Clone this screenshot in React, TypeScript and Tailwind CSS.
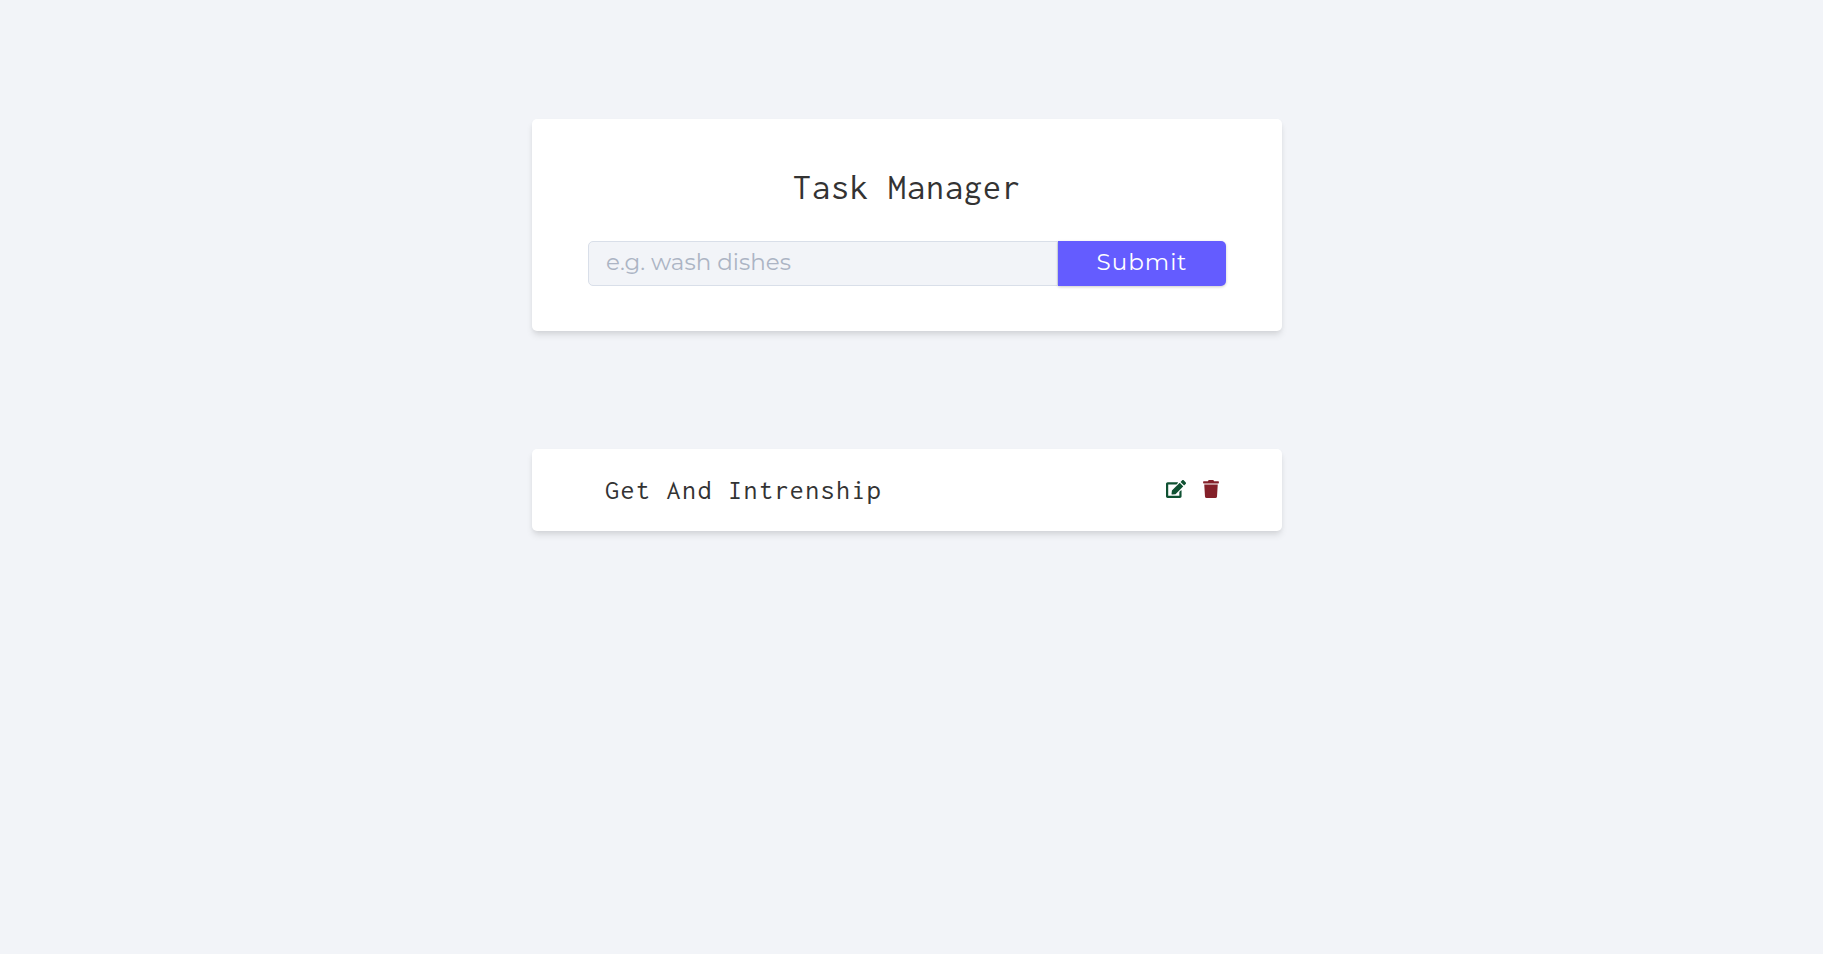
import { useState } from 'react';
import type { FormEvent } from 'react';
import { FaEdit, FaTrash } from 'react-icons/fa';

type Task = { id: number; name: string };

const initialTasks: Task[] = [{ id: 1, name: 'Get And Intrenship' }];

function TaskForm({ onAdd }: { onAdd: (name: string) => void }) {
  const [name, setName] = useState('');

  const submit = (event: FormEvent) => {
    event.preventDefault();
    if (!name.trim()) return;
    onAdd(name.trim());
    setName('');
  };

  return (
    <form
      onSubmit={submit}
      className="rounded-[5px] bg-white px-14 pt-12 pb-[45px] shadow-[0_5px_7px_-1px_rgba(0,0,0,0.1),0_2px_5px_-1px_rgba(0,0,0,0.06)]"
    >
      <h1 className="text-center font-['Inconsolata','Liberation_Mono',monospace] text-[36px] leading-10 tracking-[1px] text-[#333]">
        Task Manager
      </h1>
      <div className="mt-[34px] flex h-[45px]">
        <input
          type="text"
          aria-label="Task name"
          placeholder="e.g. wash dishes"
          value={name}
          onChange={(event) => setName(event.target.value)}
          className="min-w-0 flex-1 rounded-l-[5px] border border-[#d9dfe9] bg-[#f2f4f8] px-[17px] pb-0.5 text-[23px] text-[#222] outline-none placeholder:text-[#acb4c4]"
        />
        <button
          type="submit"
          className="w-[168px] cursor-pointer rounded-r-[5px] bg-[#645cff] pb-0.5 text-[23px] tracking-[1px] text-white shadow-[0_1px_3px_0_rgba(0,0,0,0.2)]"
        >
          Submit
        </button>
      </div>
    </form>
  );
}

function TaskRow({ task, onRemove }: { task: Task; onRemove: () => void }) {
  return (
    <li className="flex h-[82px] items-center justify-between rounded-[5px] bg-white pr-[63px] pl-[73px] shadow-[0_5px_7px_-1px_rgba(0,0,0,0.1),0_2px_5px_-1px_rgba(0,0,0,0.06)]">
      <h2 className="font-['Inconsolata','Liberation_Mono',monospace] text-[28px] leading-8 tracking-wider text-[#333]">{task.name}</h2>
      <div className="flex items-center gap-[17px] pb-0.5">
        <a href="#edit" aria-label="Edit task" className="text-[#0f5132]">
          <FaEdit className="h-[18px] w-5" />
        </a>
        <button type="button" aria-label="Delete task" onClick={onRemove} className="cursor-pointer text-[#842029]">
          <FaTrash className="h-[18px] w-4" />
        </button>
      </div>
    </li>
  );
}

export default function App() {
  const [tasks, setTasks] = useState(initialTasks);

  return (
    <div className="min-h-screen bg-[#f2f4f8] pr-[9px] font-['Montserrat','Open_Sans',sans-serif]">
      <main className="mx-auto flex max-w-[750px] flex-col gap-[118px] py-[119px]">
        <TaskForm onAdd={(name) => setTasks([...tasks, { id: Date.now(), name }])} />
        <ul className="flex flex-col gap-4">
          {tasks.map((task) => (
            <TaskRow
              key={task.id}
              task={task}
              onRemove={() => setTasks(tasks.filter((other) => other.id !== task.id))}
            />
          ))}
        </ul>
      </main>
    </div>
  );
}
